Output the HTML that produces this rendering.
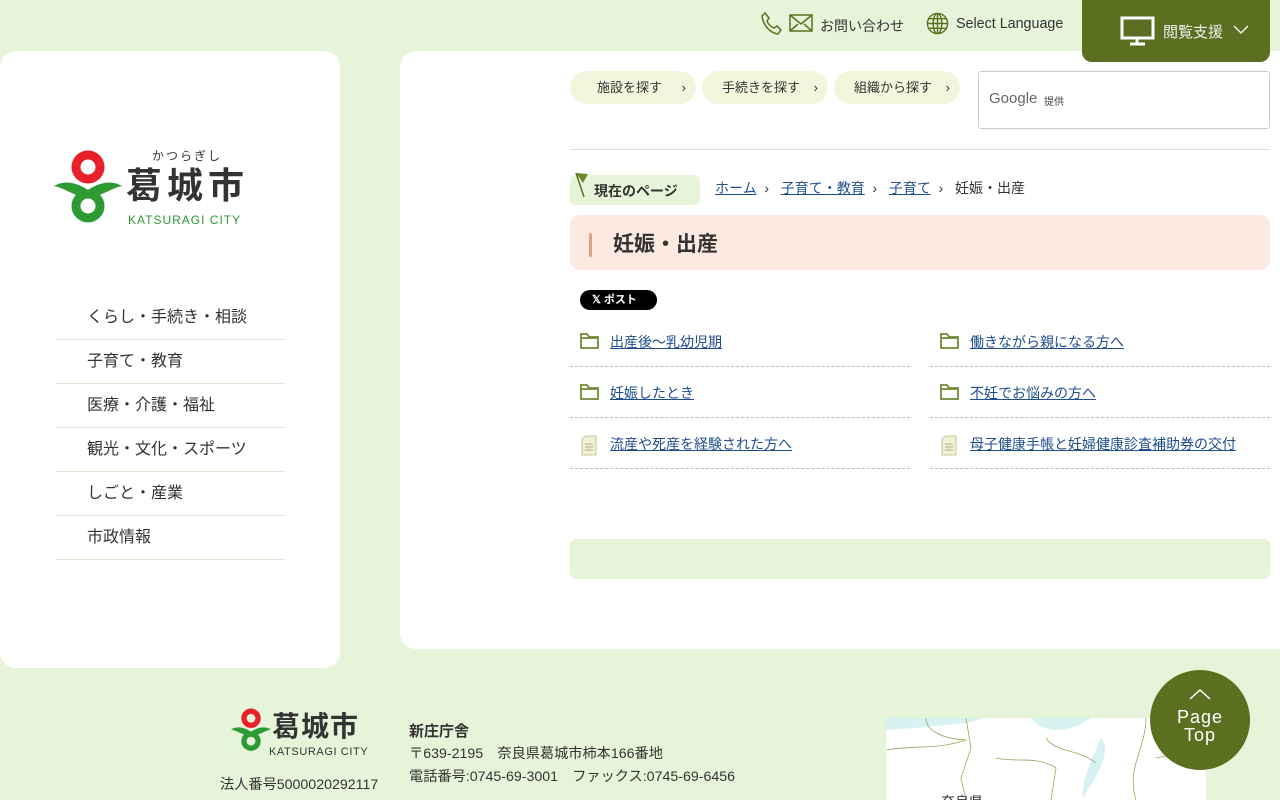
<!DOCTYPE html>
<html><head><meta charset="utf-8"><style>
*{box-sizing:border-box;margin:0;padding:0}
body{width:1280px;height:800px;overflow:hidden;background:#e6f5d9;font-family:"Liberation Sans","Noto Sans CJK JP",sans-serif;color:#333;position:relative}
.abs{position:absolute}
a{color:#1f4e8c}
.side{left:0;top:51px;width:340px;height:617px;background:#fff;border-radius:16px}
.main{left:400px;top:51px;width:900px;height:598px;background:#fff;border-radius:16px}
.nav{left:55px;width:230px;font-size:16px;color:#333}
.nav div{height:44px;line-height:44px;padding-left:32px;border-bottom:1px solid #e8e2d0}
.pill{top:71px;height:33px;border-radius:17px;background:#f3f5dc;font-size:13px;line-height:33px;padding-left:27px;color:#333}
.pill span{position:absolute;right:10px}
.item{font-size:14px}
.item a{position:absolute;left:40px;top:0}
.row{height:51px;border-bottom:1px dashed #bbb}
.hd{z-index:5}
</style></head><body>
<svg class="abs" style="left:760px;top:11px" width="24" height="26" viewBox="0 0 24 26"><path d="M5 2l4 5-2 3c1 3 4 6 7 7l3-2 4 4-3 4C10 22 3 14 2 5z" fill="none" stroke="#5a7020" stroke-width="1.5"/></svg>
<svg class="abs" style="left:789px;top:14px" width="24" height="18"><rect x="1" y="1" width="22" height="16" fill="none" stroke="#5a7020" stroke-width="1.5"/><path d="M1 1l11 9 11-9M1 17l8-7M23 17l-8-7" fill="none" stroke="#5a7020" stroke-width="1.5"/></svg>
<div class="abs" style="left:820px;top:16px;font-size:14px">お問い合わせ</div>
<svg class="abs" style="left:926px;top:12px" width="23" height="23" viewBox="0 0 24 24" fill="none" stroke="#5a7020" stroke-width="1.5"><circle cx="12" cy="12" r="10.5"/><ellipse cx="12" cy="12" rx="4.5" ry="10.5"/><path d="M1.5 12h21M3 7h18M3 17h18M12 1.5v21"/></svg>
<div class="abs" style="left:956px;top:16px;font-size:14.3px">Select Language</div>
<div class="abs hd" style="left:1082px;top:-10px;width:188px;height:72px;background:#5a7020;border-radius:10px"></div>
<svg class="abs hd" style="left:1120px;top:16px" width="35" height="30"><rect x="2" y="2" width="31" height="20" fill="none" stroke="#fff" stroke-width="3"/><path d="M17 22v5M10 28h15" stroke="#fff" stroke-width="3"/></svg>
<div class="abs hd" style="left:1163px;top:21px;font-size:15px;color:#eee">閲覧支援</div>
<svg class="abs hd" style="left:1233px;top:25px" width="16" height="10"><path d="M1 1l7 7 7-7" fill="none" stroke="#fff" stroke-width="1.3"/></svg>
<div class="abs side"></div>
<svg class="abs" style="left:54px;top:150px" width="68" height="74" viewBox="0 0 68 74"><circle cx="34" cy="17" r="12" fill="none" stroke="#e8202a" stroke-width="9"/><circle cx="34" cy="56" r="12" fill="none" stroke="#2e9a34" stroke-width="9"/><path d="M0 36c10-6 22-4 34 4 12-8 24-10 34-4-10 2-20 10-34 12C20 46 10 38 0 36z" fill="#2e9a34"/></svg>
<div class="abs" style="left:152px;top:147px;font-size:12px;letter-spacing:2px">かつらぎし</div>
<div class="abs" style="left:126px;top:164px;font-size:36px;font-weight:bold;letter-spacing:5px;color:#333;line-height:44px">葛城市</div>
<div class="abs" style="left:128px;top:213px;font-size:12px;color:#2e9a34;letter-spacing:1px">KATSURAGI CITY</div>
<div class="abs nav" style="top:296px"><div>くらし・手続き・相談</div><div>子育て・教育</div><div>医療・介護・福祉</div><div>観光・文化・スポーツ</div><div>しごと・産業</div><div>市政情報</div></div>
<div class="abs main"></div>
<div class="abs pill" style="left:570px;width:126px">施設を探す<span>›</span></div>
<div class="abs pill" style="left:702px;width:126px;padding-left:20px">手続きを探す<span>›</span></div>
<div class="abs pill" style="left:834px;width:126px;padding-left:20px">組織から探す<span>›</span></div>
<div class="abs" style="left:978px;top:71px;width:292px;height:58px;border:1px solid #ccc;border-radius:3px"><span style="position:absolute;left:10px;top:18px;font-size:15px;color:#666">Google</span><span style="position:absolute;left:65px;top:21px;font-size:10px;color:#444">提供</span></div>
<div class="abs" style="left:570px;top:149px;width:700px;border-top:1px solid #ddd"></div>
<div class="abs" style="left:570px;top:175px;width:130px;height:30px;background:#e6f5d9;border-radius:5px"></div>
<svg class="abs" style="left:573px;top:171px" width="18" height="28"><path d="M3 2l8 24" stroke="#5a7020" stroke-width="1.5"/><path d="M3 2l12 1-5 9z" fill="#6a8a30"/></svg>
<div class="abs" style="left:594px;top:181px;font-size:14px;font-weight:bold">現在のページ</div>
<div class="abs" style="left:715px;top:178px;font-size:14px;word-spacing:0"><a href="#">ホーム</a>&nbsp;&nbsp;›&nbsp;&nbsp;&nbsp;<a href="#">子育て・教育</a>&nbsp;&nbsp;›&nbsp;&nbsp;&nbsp;<a href="#">子育て</a>&nbsp;&nbsp;›&nbsp;&nbsp;&nbsp;妊娠・出産</div>
<div class="abs" style="left:570px;top:215px;width:700px;height:55px;background:#fce9df;border-radius:10px"></div>
<div class="abs" style="left:589px;top:233px;width:3px;height:24px;background:#dca37e;border-radius:2px"></div>
<div class="abs" style="left:613px;top:228px;font-size:21px;font-weight:bold;color:#333">妊娠・出産</div>
<div class="abs" style="left:580px;top:290px;width:77px;height:20px;background:#000;border-radius:10px;color:#fff;font-size:11px;line-height:20px;padding-left:12px;font-weight:bold">𝕏 ポスト</div>
<div class="abs" style="left:570px;top:316px;width:340px">
 <div class="row item" style="position:relative"><svg style="position:absolute;left:10px;top:17px" width="19" height="16"><path d="M1 1h6l2 3h9v11H1zM1 5h17" fill="none" stroke="#6d8a35" stroke-width="1.8"/></svg><a href="#" style="top:16px">出産後～乳幼児期</a></div>
 <div class="row item" style="position:relative"><svg style="position:absolute;left:10px;top:17px" width="19" height="16"><path d="M1 1h6l2 3h9v11H1zM1 5h17" fill="none" stroke="#6d8a35" stroke-width="1.8"/></svg><a href="#" style="top:16px">妊娠したとき</a></div>
 <div class="row item" style="position:relative"><svg style="position:absolute;left:11px;top:17px" width="16" height="21"><path d="M1 4l4-3h10v19H1z" fill="#f0f0d8" stroke="#c8c890"/><path d="M4 9h8M4 12h8M4 15h8" stroke="#b0b080"/></svg><a href="#" style="top:16px">流産や死産を経験された方へ</a></div>
</div>
<div class="abs" style="left:930px;top:316px;width:340px">
 <div class="row item" style="position:relative"><svg style="position:absolute;left:10px;top:17px" width="19" height="16"><path d="M1 1h6l2 3h9v11H1zM1 5h17" fill="none" stroke="#6d8a35" stroke-width="1.8"/></svg><a href="#" style="top:16px">働きながら親になる方へ</a></div>
 <div class="row item" style="position:relative"><svg style="position:absolute;left:10px;top:17px" width="19" height="16"><path d="M1 1h6l2 3h9v11H1zM1 5h17" fill="none" stroke="#6d8a35" stroke-width="1.8"/></svg><a href="#" style="top:16px">不妊でお悩みの方へ</a></div>
 <div class="row item" style="position:relative"><svg style="position:absolute;left:11px;top:17px" width="16" height="21"><path d="M1 4l4-3h10v19H1z" fill="#f0f0d8" stroke="#c8c890"/><path d="M4 9h8M4 12h8M4 15h8" stroke="#b0b080"/></svg><a href="#" style="top:16px">母子健康手帳と妊婦健康診査補助券の交付</a></div>
</div>
<div class="abs" style="left:570px;top:539px;width:700px;height:40px;background:#e6f5d9;border-radius:6px"></div>
<svg class="abs" style="left:231px;top:708px" width="40" height="44" viewBox="0 0 68 74"><circle cx="34" cy="17" r="12" fill="none" stroke="#e8202a" stroke-width="9"/><circle cx="34" cy="56" r="12" fill="none" stroke="#2e9a34" stroke-width="9"/><path d="M0 36c10-6 22-4 34 4 12-8 24-10 34-4-10 2-20 10-34 12C20 46 10 38 0 36z" fill="#2e9a34"/></svg>
<div class="abs" style="left:272px;top:709px;font-size:28px;font-weight:bold;line-height:36px;letter-spacing:1px">葛城市</div>
<div class="abs" style="left:269px;top:746px;font-size:11px;letter-spacing:0.6px">KATSURAGI CITY</div>
<div class="abs" style="left:220px;top:774px;font-size:14.2px">法人番号5000020292117</div>
<div class="abs" style="left:409px;top:720px;font-size:15px;font-weight:bold">新庄庁舎</div>
<div class="abs" style="left:409px;top:743px;font-size:14.2px">〒639-2195　奈良県葛城市柿本166番地</div>
<div class="abs" style="left:409px;top:766px;font-size:14.2px">電話番号:0745-69-3001　ファックス:0745-69-6456</div>
<div class="abs" style="left:886px;top:718px;width:320px;height:82px;background:#fff;overflow:hidden">
<svg width="320" height="82" style="position:absolute;left:0;top:0"><path d="M0 12L30 10 80 5 100 0H0z" fill="#d8f2f2"/><path d="M145 0c10 12 30 20 60 0z" fill="#d8f2f2"/><path d="M215 20c-10 25-20 40-18 60 12-20 30-45 18-60z" fill="#d8f2f2"/><g fill="none" stroke="#9aa860" stroke-width="0.8"><path d="M0 32c30-5 50 0 80-10M80 0l5 30-10 30 5 22M40 0c0 10 10 20 40 22M160 20c10 15 30 10 50 25M110 40c20 5 40-3 60 10l-5 32M260 0c0 30-20 50-10 82M270 40l50-10"/></g></svg>
<span style="position:absolute;left:55px;top:74px;font-size:14px">奈良県</span></div>
<div class="abs" style="left:1150px;top:670px;width:100px;height:100px;border-radius:50%;background:#5a7020;color:#fff;text-align:center"><svg style="position:absolute;left:39px;top:18px" width="22" height="12"><path d="M1 11l10-9 10 9" fill="none" stroke="#fff" stroke-width="1.5"/></svg><div style="position:absolute;top:38px;width:100%;font-size:18px;line-height:18px;letter-spacing:1px">Page<br>Top</div></div>
</body></html>
